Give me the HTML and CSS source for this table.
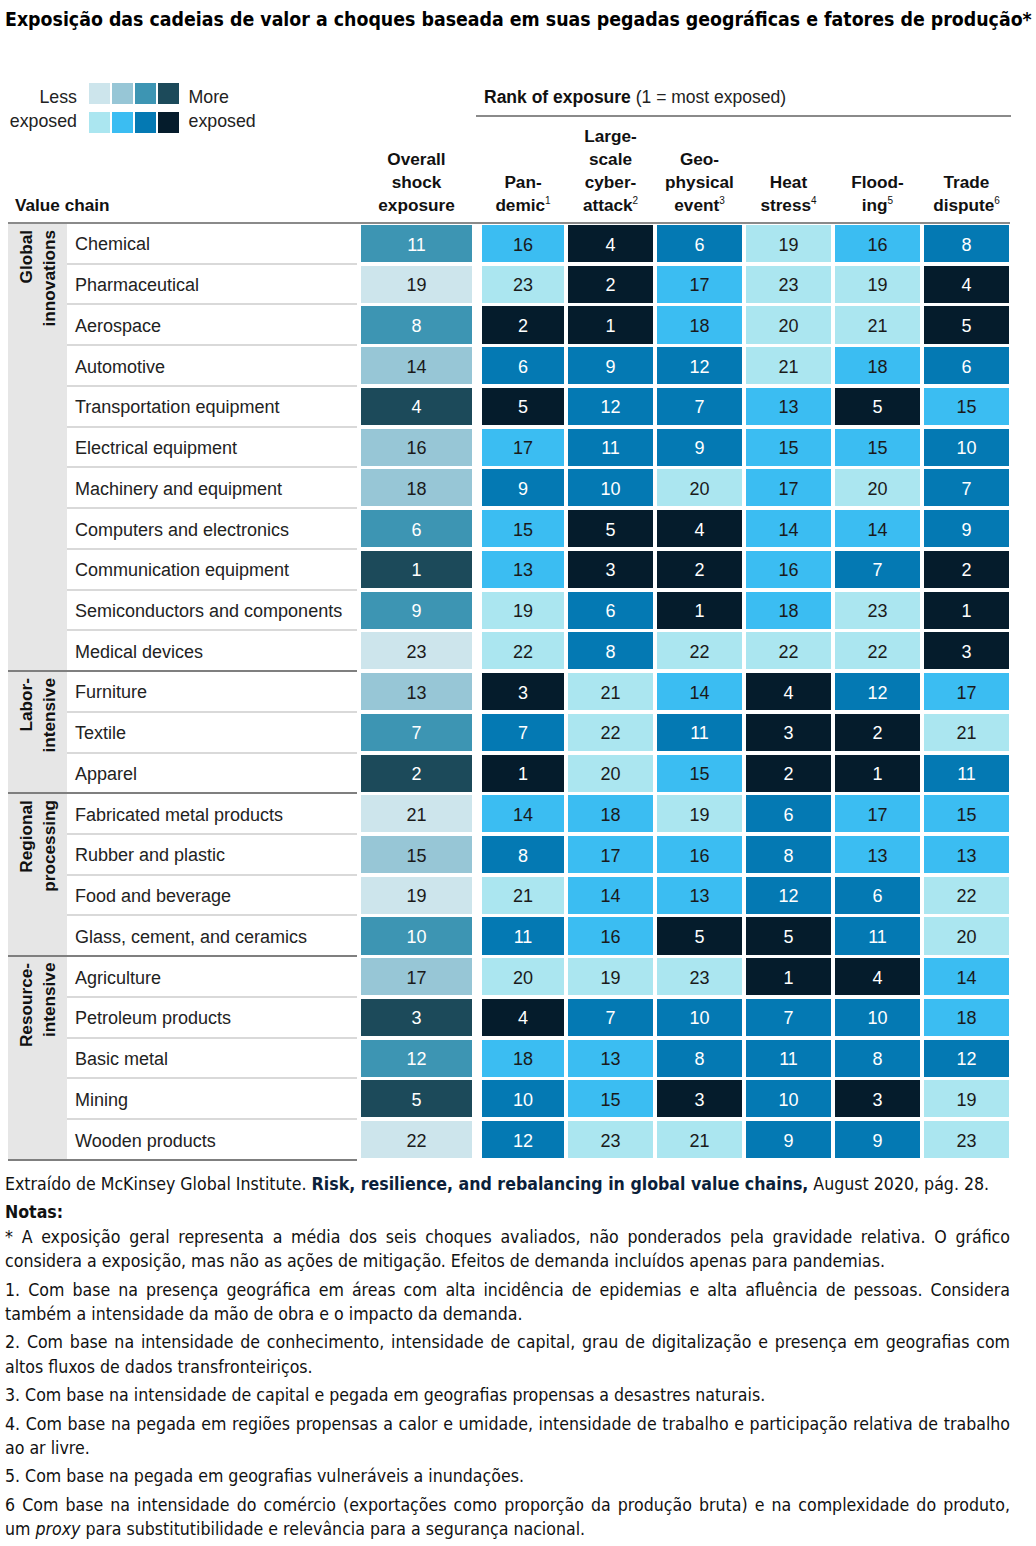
FILE: index.html
```html
<!DOCTYPE html>
<html lang="pt">
<head>
<meta charset="utf-8">
<title>Exposição das cadeias de valor</title>
<link rel="stylesheet" href="styles.css">
</head>
<body>
<h1 class="title">Exposição das cadeias de valor a choques baseada em suas pegadas geográficas e fatores de produção*</h1>

<div class="head">
  <div class="head-left">
    <div class="legend">
      <div class="leg-text leg-left">Less<br>exposed</div>
      <div class="swatches">
        <span class="sw o b1"></span><span class="sw o b2"></span><span class="sw o b3"></span><span class="sw o b4"></span>
        <span class="sw s b1"></span><span class="sw s b2"></span><span class="sw s b3"></span><span class="sw s b4"></span>
      </div>
      <div class="leg-text">More<br>exposed</div>
    </div>
    <div class="head-bottom">
      <div class="hcol vc">Value chain</div>
      <div class="hcol ov">Overall<br>shock<br>exposure</div>
    </div>
  </div>
  <div class="head-right">
    <div class="rank"><b>Rank of exposure</b> (1 = most exposed)</div>
    <div class="shock-heads">
      <div class="hcol">Pan-<br>demic<sup>1</sup></div>
      <div class="hcol">Large-<br>scale<br>cyber-<br>attack<sup>2</sup></div>
      <div class="hcol">Geo-<br>physical<br>event<sup>3</sup></div>
      <div class="hcol">Heat<br>stress<sup>4</sup></div>
      <div class="hcol">Flood-<br>ing<sup>5</sup></div>
      <div class="hcol">Trade<br>dispute<sup>6</sup></div>
    </div>
  </div>
</div>

<div class="table">
  <div class="group">
    <div class="gname"><span>Global<br>innovations</span></div>
    <div class="rows">
      <div class="row"><div class="lab">Chemical</div><div class="c o b3">11</div><div class="c s b2">16</div><div class="c s b4">4</div><div class="c s b3">6</div><div class="c s b1">19</div><div class="c s b2">16</div><div class="c s b3">8</div></div>
      <div class="row"><div class="lab">Pharmaceutical</div><div class="c o b1">19</div><div class="c s b1">23</div><div class="c s b4">2</div><div class="c s b2">17</div><div class="c s b1">23</div><div class="c s b1">19</div><div class="c s b4">4</div></div>
      <div class="row"><div class="lab">Aerospace</div><div class="c o b3">8</div><div class="c s b4">2</div><div class="c s b4">1</div><div class="c s b2">18</div><div class="c s b1">20</div><div class="c s b1">21</div><div class="c s b4">5</div></div>
      <div class="row"><div class="lab">Automotive</div><div class="c o b2">14</div><div class="c s b3">6</div><div class="c s b3">9</div><div class="c s b3">12</div><div class="c s b1">21</div><div class="c s b2">18</div><div class="c s b3">6</div></div>
      <div class="row"><div class="lab">Transportation equipment</div><div class="c o b4">4</div><div class="c s b4">5</div><div class="c s b3">12</div><div class="c s b3">7</div><div class="c s b2">13</div><div class="c s b4">5</div><div class="c s b2">15</div></div>
      <div class="row"><div class="lab">Electrical equipment</div><div class="c o b2">16</div><div class="c s b2">17</div><div class="c s b3">11</div><div class="c s b3">9</div><div class="c s b2">15</div><div class="c s b2">15</div><div class="c s b3">10</div></div>
      <div class="row"><div class="lab">Machinery and equipment</div><div class="c o b2">18</div><div class="c s b3">9</div><div class="c s b3">10</div><div class="c s b1">20</div><div class="c s b2">17</div><div class="c s b1">20</div><div class="c s b3">7</div></div>
      <div class="row"><div class="lab">Computers and electronics</div><div class="c o b3">6</div><div class="c s b2">15</div><div class="c s b4">5</div><div class="c s b4">4</div><div class="c s b2">14</div><div class="c s b2">14</div><div class="c s b3">9</div></div>
      <div class="row"><div class="lab">Communication equipment</div><div class="c o b4">1</div><div class="c s b2">13</div><div class="c s b4">3</div><div class="c s b4">2</div><div class="c s b2">16</div><div class="c s b3">7</div><div class="c s b4">2</div></div>
      <div class="row"><div class="lab">Semiconductors and components</div><div class="c o b3">9</div><div class="c s b1">19</div><div class="c s b3">6</div><div class="c s b4">1</div><div class="c s b2">18</div><div class="c s b1">23</div><div class="c s b4">1</div></div>
      <div class="row"><div class="lab">Medical devices</div><div class="c o b1">23</div><div class="c s b1">22</div><div class="c s b3">8</div><div class="c s b1">22</div><div class="c s b1">22</div><div class="c s b1">22</div><div class="c s b4">3</div></div>
    </div>
  </div>
  <div class="group">
    <div class="gname"><span>Labor-<br>intensive</span></div>
    <div class="rows">
      <div class="row"><div class="lab">Furniture</div><div class="c o b2">13</div><div class="c s b4">3</div><div class="c s b1">21</div><div class="c s b2">14</div><div class="c s b4">4</div><div class="c s b3">12</div><div class="c s b2">17</div></div>
      <div class="row"><div class="lab">Textile</div><div class="c o b3">7</div><div class="c s b3">7</div><div class="c s b1">22</div><div class="c s b3">11</div><div class="c s b4">3</div><div class="c s b4">2</div><div class="c s b1">21</div></div>
      <div class="row"><div class="lab">Apparel</div><div class="c o b4">2</div><div class="c s b4">1</div><div class="c s b1">20</div><div class="c s b2">15</div><div class="c s b4">2</div><div class="c s b4">1</div><div class="c s b3">11</div></div>
    </div>
  </div>
  <div class="group">
    <div class="gname"><span>Regional<br>processing</span></div>
    <div class="rows">
      <div class="row"><div class="lab">Fabricated metal products</div><div class="c o b1">21</div><div class="c s b2">14</div><div class="c s b2">18</div><div class="c s b1">19</div><div class="c s b3">6</div><div class="c s b2">17</div><div class="c s b2">15</div></div>
      <div class="row"><div class="lab">Rubber and plastic</div><div class="c o b2">15</div><div class="c s b3">8</div><div class="c s b2">17</div><div class="c s b2">16</div><div class="c s b3">8</div><div class="c s b2">13</div><div class="c s b2">13</div></div>
      <div class="row"><div class="lab">Food and beverage</div><div class="c o b1">19</div><div class="c s b1">21</div><div class="c s b2">14</div><div class="c s b2">13</div><div class="c s b3">12</div><div class="c s b3">6</div><div class="c s b1">22</div></div>
      <div class="row"><div class="lab">Glass, cement, and ceramics</div><div class="c o b3">10</div><div class="c s b3">11</div><div class="c s b2">16</div><div class="c s b4">5</div><div class="c s b4">5</div><div class="c s b3">11</div><div class="c s b1">20</div></div>
    </div>
  </div>
  <div class="group">
    <div class="gname"><span>Resource-<br>intensive</span></div>
    <div class="rows">
      <div class="row"><div class="lab">Agriculture</div><div class="c o b2">17</div><div class="c s b1">20</div><div class="c s b1">19</div><div class="c s b1">23</div><div class="c s b4">1</div><div class="c s b4">4</div><div class="c s b2">14</div></div>
      <div class="row"><div class="lab">Petroleum products</div><div class="c o b4">3</div><div class="c s b4">4</div><div class="c s b3">7</div><div class="c s b3">10</div><div class="c s b3">7</div><div class="c s b3">10</div><div class="c s b2">18</div></div>
      <div class="row"><div class="lab">Basic metal</div><div class="c o b3">12</div><div class="c s b2">18</div><div class="c s b2">13</div><div class="c s b3">8</div><div class="c s b3">11</div><div class="c s b3">8</div><div class="c s b3">12</div></div>
      <div class="row"><div class="lab">Mining</div><div class="c o b4">5</div><div class="c s b3">10</div><div class="c s b2">15</div><div class="c s b4">3</div><div class="c s b3">10</div><div class="c s b4">3</div><div class="c s b1">19</div></div>
      <div class="row"><div class="lab">Wooden products</div><div class="c o b1">22</div><div class="c s b3">12</div><div class="c s b1">23</div><div class="c s b1">21</div><div class="c s b3">9</div><div class="c s b3">9</div><div class="c s b1">23</div></div>
    </div>
  </div>
</div>

<div class="notes">
  <p class="src">Extraído de McKinsey Global Institute. <b class="ref">Risk, resilience, and rebalancing in global value chains,</b> August 2020, pág. 28.</p>
  <p class="notas"><b>Notas:</b></p>
  <p class="j">* A exposição geral representa a média dos seis choques avaliados, não ponderados pela gravidade relativa. O gráfico considera a exposição, mas não as ações de mitigação. Efeitos de demanda incluídos apenas para pandemias.</p>
  <p class="j">1. Com base na presença geográfica em áreas com alta incidência de epidemias e alta afluência de pessoas. Considera também a intensidade da mão de obra e o impacto da demanda.</p>
  <p class="j">2. Com base na intensidade de conhecimento, intensidade de capital, grau de digitalização e presença em geografias com altos fluxos de dados transfronteiriços.</p>
  <p class="j">3. Com base na intensidade de capital e pegada em geografias propensas a desastres naturais.</p>
  <p class="j">4. Com base na pegada em regiões propensas a calor e umidade, intensidade de trabalho e participação relativa de trabalho ao ar livre.</p>
  <p class="j">5. Com base na pegada em geografias vulneráveis a inundações.</p>
  <p class="j">6 Com base na intensidade do comércio (exportações como proporção da produção bruta) e na complexidade do produto, um&nbsp;<i>proxy</i> para substitutibilidade e relevância para a segurança nacional.</p>
</div>
</body>
</html>
```

FILE: styles.css
```css
* { box-sizing: border-box; }

body {
  margin: 0;
  padding: 0 5px;
  background: #fff;
  color: #000;
  font-family: "Liberation Sans", Arial, sans-serif;
}

.title {
  margin: 8px 0 0;
  font-family: "DejaVu Sans Condensed", "DejaVu Sans", sans-serif;
  font-stretch: condensed;
  font-weight: 700;
  font-size: 19.35px;
  line-height: 24px;
  white-space: nowrap;
}

/* ---------- header ---------- */
.head {
  display: flex;
  margin-left: 3px;
  height: 190px;
}

.head-left {
  width: 468px;
  display: flex;
  flex-direction: column;
  justify-content: space-between;
}

.legend {
  display: flex;
  align-items: flex-start;
  margin-top: 51px;
  font-size: 17.8px;
  color: #222;
}

.leg-text {
  line-height: 24px;
  margin-top: 2px;
}

.leg-left {
  width: 69px;
  text-align: right;
  margin-right: 12px;
}

.swatches {
  display: grid;
  grid-template-columns: repeat(4, 20.5px);
  grid-auto-rows: 20.5px;
  column-gap: 2.5px;
  row-gap: 8.5px;
  margin-right: 10px;
}

.sw { display: block; }

.head-bottom {
  display: grid;
  grid-template-columns: 353px 111px;
  align-items: end;
}

.hcol {
  font-weight: 700;
  font-size: 17.2px;
  line-height: 23px;
  padding-bottom: 5px;
  text-align: center;
  color: #111;
}

.hcol.vc {
  text-align: left;
  padding-left: 7px;
}

.hcol sup {
  font-weight: 400;
  font-size: 10px;
  line-height: 0;
  vertical-align: 7px;
}

.head-right {
  width: 535px;
  display: flex;
  flex-direction: column;
}

.rank {
  margin-top: 54px;
  padding: 0 0 6px 8px;
  border-bottom: 2px solid #8a8a8a;
  font-size: 17.5px;
  line-height: 23px;
  color: #222;
}

.rank b { color: #111; }

.shock-heads {
  margin-top: auto;
  margin-left: 6px;
  display: grid;
  grid-template-columns: 82px repeat(5, 85px);
  column-gap: 4px;
  align-items: end;
}

/* ---------- table ---------- */
.table {
  margin-left: 3px;
  width: 1002px;
  border-top: 2px solid #8a8a8a;
}

.group {
  display: flex;
}

.gname {
  width: 59px;
  flex: none;
  background: #e6e6e6;
  border-bottom: 2px solid #7f7f7f;
  display: flex;
  justify-content: center;
  align-items: flex-start;
  padding-top: 6px;
}

.gname span {
  writing-mode: vertical-rl;
  transform: rotate(180deg);
  text-align: end;
  font-weight: 700;
  font-size: 17.2px;
  line-height: 23px;
  color: #111;
}

.rows {
  flex: 1;
}

.row {
  display: grid;
  grid-template-columns: 290px 117px 82px repeat(5, 85px);
  column-gap: 4px;
  height: 40.74px;
}

.lab {
  display: flex;
  align-items: center;
  padding: 3px 0 0 8px;
  border-bottom: 2px solid #d9d9d9;
  font-size: 18px;
  color: #222;
}

.row:last-child .lab {
  border-bottom-color: #7f7f7f;
}

.c {
  margin: 1px 0 2.7px;
  padding-top: 3px;
  display: flex;
  align-items: center;
  justify-content: center;
  font-size: 18px;
  color: #1a1a1a;
}

.c.o { width: 111px; }

.o.b1 { background: #cde5ec; }
.o.b2 { background: #97c6d6; }
.o.b3 { background: #3d95b3; color: #fff; }
.o.b4 { background: #1c4a5a; color: #fff; }
.s.b1 { background: #abe6f0; }
.s.b2 { background: #3bbdf2; }
.s.b3 { background: #0479b3; color: #fff; }
.s.b4 { background: #051c2c; color: #fff; }

/* ---------- notes ---------- */
.notes {
  width: 1005px;
  margin-top: 11px;
  font-family: "DejaVu Sans Condensed", "DejaVu Sans", sans-serif;
  font-stretch: condensed;
  font-size: 17.6px;
  line-height: 24.4px;
  color: #111;
}

.notes p {
  margin: 0 0 4px;
}

.notes .notas { margin: 0; }

.notes .j { text-align: justify; }

.ref { color: #0b1f3a; }
```
